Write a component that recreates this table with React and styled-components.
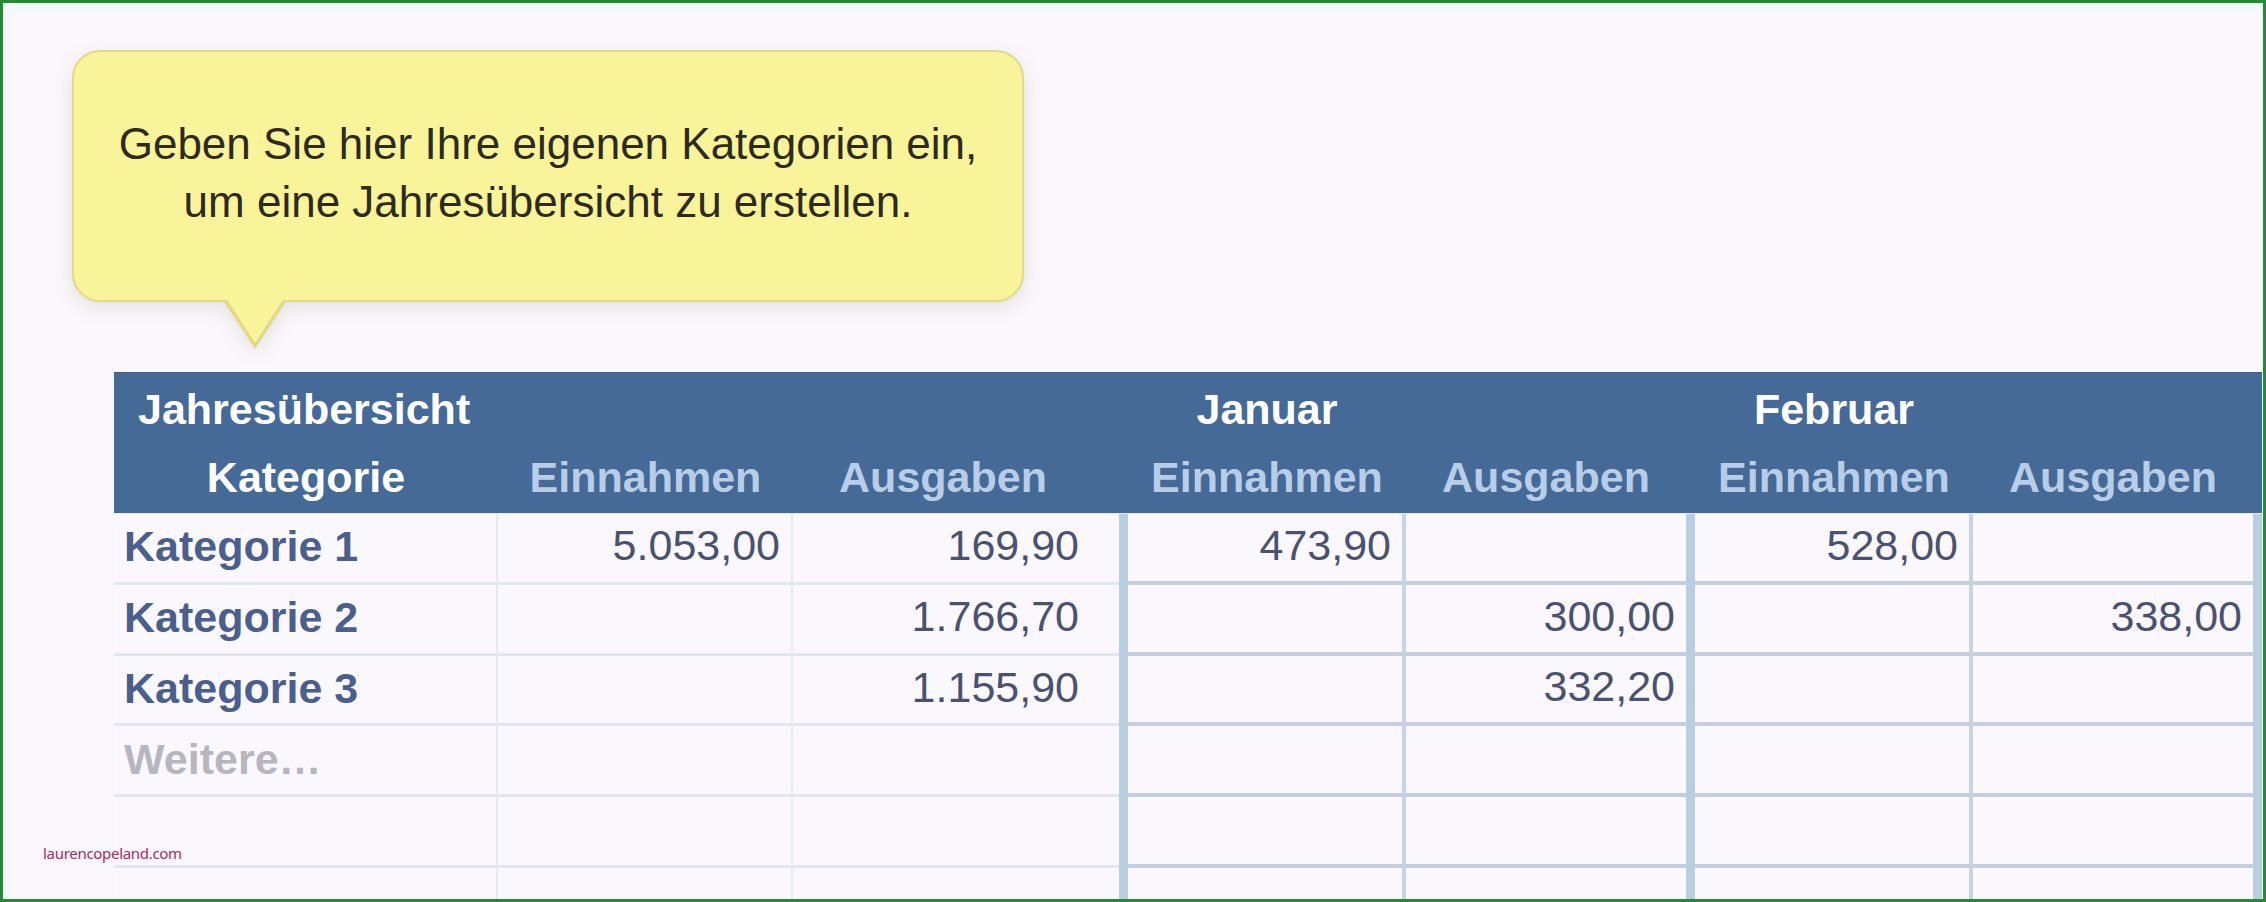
import React from 'react';
import styled, { createGlobalStyle, css } from 'styled-components';

const GlobalStyle = createGlobalStyle`
  html, body {
    margin: 0;
    padding: 0;
  }
  body {
    background: #f9f7fb;
    font-family: "Liberation Sans", Arial, sans-serif;
  }
`;

// Kategorie | Einnahmen | Ausgaben | sep | Jan E | Jan A | sep | Feb E | Feb A | sep
const COLUMNS = '384px 295px 326px 9px 278px 280px 9px 278px 280px 9px';

const rows = [
  { label: 'Kategorie 1', values: ['5.053,00', '169,90', '473,90', '', '528,00', ''] },
  { label: 'Kategorie 2', values: ['', '1.766,70', '', '300,00', '', '338,00'] },
  { label: 'Kategorie 3', values: ['', '1.155,90', '', '332,20', '', ''] },
  { label: 'Weitere…', placeholder: true, values: ['', '', '', '', '', ''] },
  { label: '', values: ['', '', '', '', '', ''] },
  { label: '', values: ['', '', '', '', '', ''] },
];

export default function App() {
  return (
    <>
      <GlobalStyle />
      <Frame>
        <Bubble>
          Geben Sie hier Ihre eigenen Kategorien ein,
          <br />
          um eine Jahresübersicht zu erstellen.
        </Bubble>

        <Table>
          <Header>
            <Title>Jahresübersicht</Title>
            <Month $col={5}>Januar</Month>
            <Month $col={8}>Februar</Month>

            <SubHead $col={1} $strong>Kategorie</SubHead>
            <SubHead $col={2}>Einnahmen</SubHead>
            <SubHead $col={3} $inset>Ausgaben</SubHead>
            <SubHead $col={5}>Einnahmen</SubHead>
            <SubHead $col={6}>Ausgaben</SubHead>
            <SubHead $col={8}>Einnahmen</SubHead>
            <SubHead $col={9}>Ausgaben</SubHead>
          </Header>

          <Body>
            {rows.map((row, i) => (
              <React.Fragment key={i}>
                <LabelCell $placeholder={row.placeholder}>{row.label}</LabelCell>
                <SumCell $divider>{row.values[0]}</SumCell>
                <SumCell $inset>{row.values[1]}</SumCell>
                <Separator />
                <MonthCell $divider>{row.values[2]}</MonthCell>
                <MonthCell>{row.values[3]}</MonthCell>
                <Separator />
                <MonthCell $divider>{row.values[4]}</MonthCell>
                <MonthCell>{row.values[5]}</MonthCell>
                <Separator />
              </React.Fragment>
            ))}
          </Body>
        </Table>

        <Watermark>laurencopeland.com</Watermark>
      </Frame>
    </>
  );
}

const Frame = styled.div`
  position: relative;
  box-sizing: border-box;
  width: 2266px;
  height: 902px;
  padding-top: 47px;
  border: 3px solid #228b34;
  background: #f9f7fb;
  box-shadow: inset 0 9px 0 #f3f9f7, inset 9px 0 0 #f4f8f8;
  overflow: hidden;
  display: flex;
  flex-direction: column;
`;

const Bubble = styled.div`
  position: relative;
  flex-shrink: 0;
  box-sizing: border-box;
  width: 952px;
  height: 252px;
  margin-left: 69px;
  display: flex;
  align-items: center;
  justify-content: center;
  padding-bottom: 6px;
  text-align: center;
  font-size: 44px;
  line-height: 58px;
  color: #2e2a1e;
  background: #f9f49a;
  border: 2px solid #e2d889;
  border-radius: 28px;
  filter: drop-shadow(0 6px 9px rgba(90, 80, 40, 0.12));

  &::before,
  &::after {
    content: '';
    position: absolute;
    top: 100%;
    clip-path: polygon(0 0, 100% 0, 50% 100%);
  }

  &::before {
    left: 149px;
    width: 64px;
    height: 49px;
    background: #e2d889;
  }

  &::after {
    left: 152px;
    width: 58px;
    height: 45px;
    margin-top: -2px;
    background: #f9f49a;
  }
`;

const Table = styled.div`
  flex-shrink: 0;
  margin: 70px 0 0 111px;
  width: 2148px;
  display: flex;
  flex-direction: column;
`;

const Header = styled.div`
  display: grid;
  grid-template-columns: ${COLUMNS};
  grid-template-rows: 70px 70px;
  background: #466a98;
  border-top: 1px solid #3d5e8a;
  border-bottom: 1px solid #e0e7f0;
  color: #ffffff;
  font-size: 43px;
  font-weight: 700;
`;

const Title = styled.div`
  grid-row: 1;
  grid-column: 1 / span 3;
  display: flex;
  align-items: center;
  padding: 2px 0 0 24px;
`;

const Month = styled.div`
  grid-row: 1;
  grid-column: ${(p) => p.$col};
  display: flex;
  align-items: center;
  justify-content: center;
  padding-top: 2px;
`;

const SubHead = styled.div`
  grid-row: 2;
  grid-column: ${(p) => p.$col};
  display: flex;
  align-items: center;
  justify-content: center;
  padding: 0 ${(p) => (p.$inset ? '26px' : '0')} 2px 0;
  color: ${(p) => (p.$strong ? '#ffffff' : '#b8cde7')};
`;

const Body = styled.div`
  display: grid;
  grid-template-columns: ${COLUMNS};
  grid-auto-rows: 70.75px;
`;

const cellBase = css`
  box-sizing: border-box;
  display: flex;
  align-items: center;
  justify-content: flex-end;
  padding: 0 11px 4px 0;
  font-size: 43px;
  color: #4a5270;
  background: #faf8fc;
`;

const LabelCell = styled.div`
  ${cellBase};
  justify-content: flex-start;
  padding: 0 0 2px 10px;
  font-weight: 700;
  color: ${(p) => (p.$placeholder ? '#b7b5be' : '#4a5f8c')};
  border-right: 2px solid #e6e9f0;
  border-bottom: 3px solid #e3e6ec;
`;

const SumCell = styled.div`
  ${cellBase};
  padding-right: ${(p) => (p.$inset ? '40px' : '11px')};
  border-bottom: 3px solid #e3e6ec;
  border-right: ${(p) => (p.$divider ? '2px solid #e6e9f0' : 'none')};
`;

const MonthCell = styled.div`
  ${cellBase};
  border-bottom: 4px solid #c4cedf;
  border-right: ${(p) => (p.$divider ? '4px solid #c6d5e5' : 'none')};
`;

const Separator = styled.div`
  background: #b8cfe0;
`;

const Watermark = styled.div`
  position: absolute;
  left: 40px;
  top: 840px;
  font-family: "Noto Sans", sans-serif;
  font-size: 15px;
  letter-spacing: -0.3px;
  color: #a8295c;
`;
